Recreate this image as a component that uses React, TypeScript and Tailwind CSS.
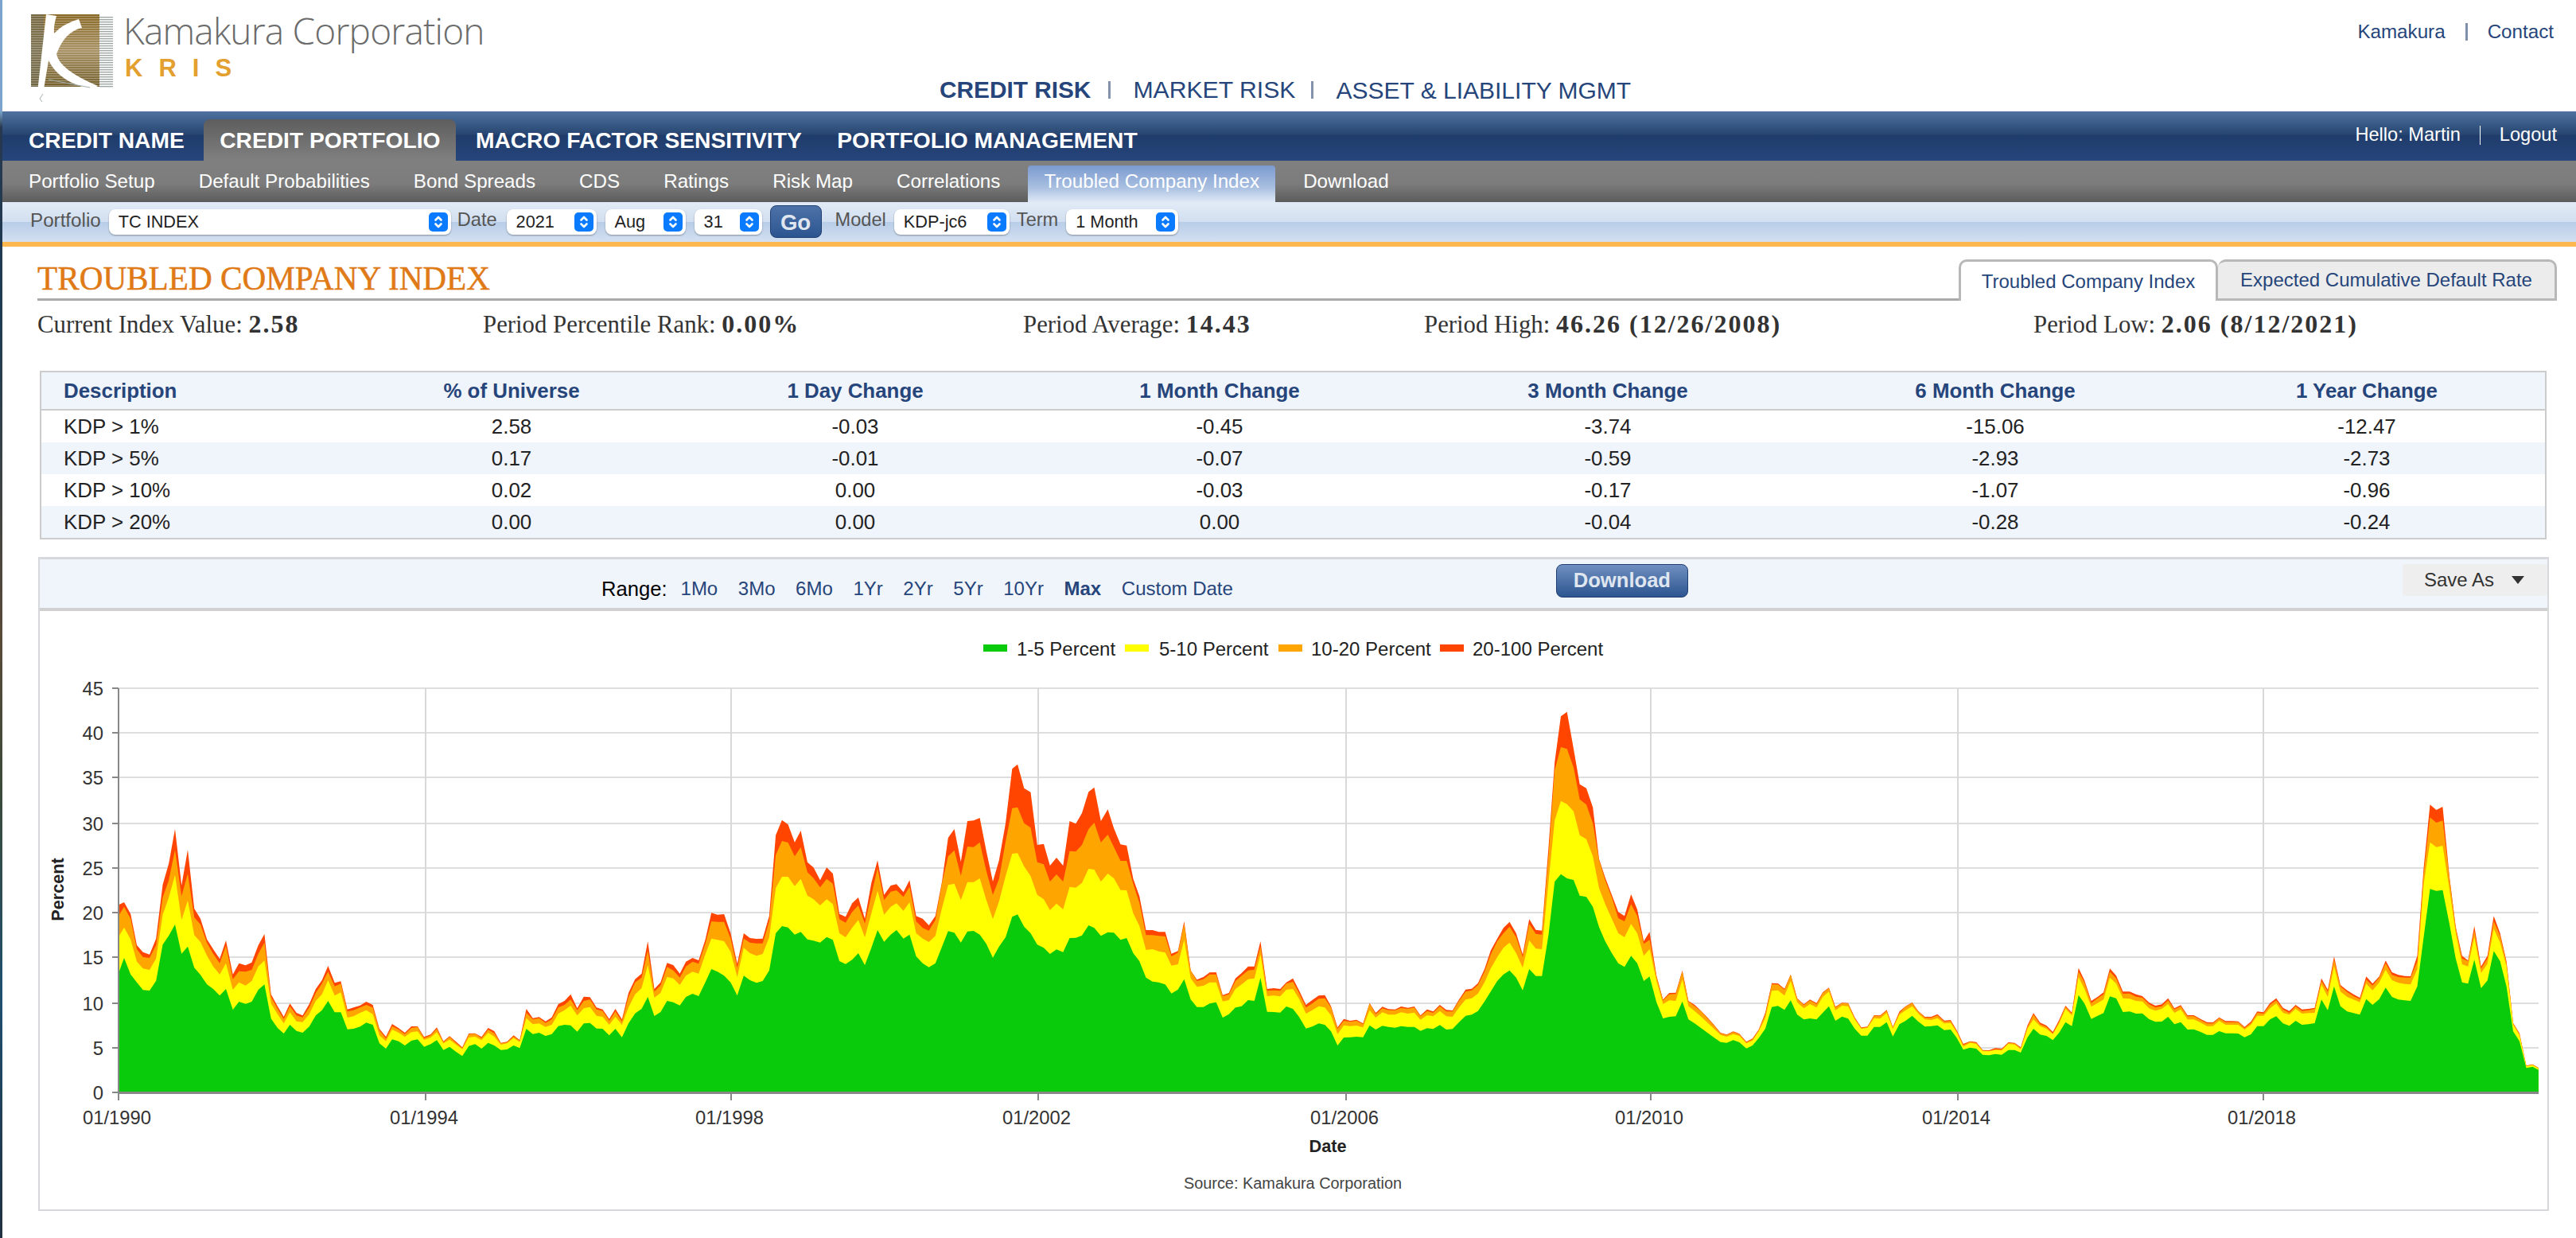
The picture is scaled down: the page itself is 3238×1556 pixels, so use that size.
const serif = 'font-[Liberation_Serif,serif]';

// chart traced month by month: crop x, then the tops of green, yellow, orange and red
const traces = [
  {
    ox: 140, oy: 960, sx: 2.063,
    rows: `20 790 655 575 537;33 738 623 545 528;50 800 668 590 572;66 830 752 705 690;82 859 778 735 716;99 861 783 738 725;116 824 740 690 665;133 688 575 510 462;149 654 510 445 382;165 612 425 330 252;182 722 595 505 465;198 695 522 420 330;215 775 652 585 552;231 802 678 612 590;248 838 730 682 668;264 855 770 722 705;281 880 800 758 742;297 855 758 692 672;315 933 858 818 800;331 903 830 788 758;348 911 842 790 766;364 903 825 783 755;381 858 770 722 690;397 838 748 680 648;414 967 910 885 875;431 1002 950 930 920;447 1023 985 968 960;463 990 943 920 910;480 1013 977 955 945;496 1020 980 962 955;513 997 950 925 912;530 955 900 870 855;546 935 875 835 822;562 900 822 790 768;579 943 880 845 832;595 943 868 835 826;612 1007 963 940 932;628 1005 958 935 925;645 997 945 925 917;661 982 935 915 903;678 990 950 925 915;695 1060 1030 1010 1005;712 1080 1052 1042 1035;728 1045 1008 995 987;745 1052 1020 1008 1003;761 1068 1035 1025 1020;778 1050 1018 1002 996;794 1045 1015 998 996;811 1073 1047 1040 1036;828 1063 1038 1030 1026;844 1048 1018 1005 1000;861 1085 1060 1055 1052;877 1073 1046 1036 1033;894 1092 1065 1058 1054;910 1108 1082 1078 1075;927 1070 1038 1026 1023;943 1063 1035 1024 1022;960 1080 1048 1040 1036;977 1058 1020 1008 1002;993 1068 1035 1022 1014;1010 1085 1065 1060 1058;1026 1083 1060 1056 1054;1043 1068 1040 1034 1030;1059 1078 1055 1050 1048;1076 1005 965 945 930;1093 1025 988 970 965;1109 1020 985 965 961;1126 1032 998 983 977;1142 1025 990 970 962;1159 995 948 925 912;1175 990 935 915 900;1191 992 918 895 875;1208 1016 955 935 928;1225 985 928 900 884;1241 983 923 895 886;1258 1004 956 932 925;1274 1005 960 938 932;1291 1030 990 975 968;1307 1005 960 940 930;1324 1037 990 978 970;1341 985 925 885 870;1358 947 875 830 818;1375 930 852 812 797;1391 885 765 710 675;1408 957 888 865 855;1424 942 870 842 830;1441 900 810 772 757;1457 905 815 785 765;1474 917 840 812 797;1490 885 805 770 752;1507 873 790 752 738;1523 882 797 760 747;1540 830 725 685 670;1556 780 665 600 568`,
  },
  {
    ox: 900, oy: 920, sx: 2.063,
    rows: `4 910 790 722 695;21 925 795 722 693;38 950 835 785 765;55 1000 930 895 880;72 925 820 785 765;88 942 840 800 783;105 952 850 803 786;121 945 843 803 785;138 905 780 720 700;155 765 595 470 395;171 738 552 417 338;187 743 552 423 355;204 770 587 475 422;220 760 560 440 378;237 788 623 535 497;253 793 637 557 517;270 800 660 592 565;287 779 637 560 517;303 790 655 578 540;320 870 765 712 692;336 881 780 725 703;353 865 745 685 652;369 840 715 660 630;386 885 780 728 710;403 820 690 620 575;419 753 605 520 490;436 797 695 640 620;453 770 665 608 585;468 753 652 603 580;486 785 680 628 610;502 770 648 590 565;519 852 765 720 700;536 878 785 745 710;552 893 798 755 735;569 878 775 715 700;586 815 670 575 570;602 757 583 475 405;618 763 578 452 372;635 800 640 548 495;652 758 572 438 342;668 756 572 440 340;684 770 558 422 330;701 805 640 530 455;718 857 712 620 570;734 815 645 560 490;751 780 550 420 350;768 703 465 293 145;782 694 463 290 128;799 740 513 350 218;816 765 550 367 233;833 808 620 497 432;850 820 637 505 428;866 843 678 570 510;883 826 653 543 480;900 836 675 570 510;917 783 590 455 342;933 782 593 457 352;949 773 575 432 312;966 735 522 372 232;981 745 525 348 215;998 775 570 422 342;1016 761 540 393 298;1032 763 558 440 370;1049 790 602 492 430;1065 783 603 492 434;1082 840 690 580 560;1098 870 737 650 625;1115 932 828 772 753;1132 947 825 772 753;1148 950 833 775 760;1165 958 838 777 760;1181 992 887 852 842;1198 977 882 838 832;1214 938 790 730 720;1231 1015 935 905 905;1247 1043 967 945 940;1264 1043 963 938 930;1280 1030 950 920 913;1297 1025 950 920 912;1314 1083 1022 1002 998;1330 1070 1017 995 990;1347 1045 975 945 935;1363 1040 958 925 915;1380 1017 938 905 890;1396 1020 935 902 890;1412 933 845 815 795;1429 1061 1002 982 975;1446 1062 1000 980 972;1463 1064 1003 982 975;1479 1041 978 955 950;1496 1050 975 948 935;1512 1080 1012 990 980;1530 1124 1068 1045 1035;1546 1117 1055 1030 1017;1563 1105 1040 1012 1000`,
  },
  {
    ox: 1660, oy: 870, sx: 2.063,
    rows: `11 1260 1195 1160 1148;27 1285 1225 1195 1190;44 1338 1295 1275 1270;60 1308 1262 1245 1238;77 1307 1265 1249 1245;93 1305 1263 1245 1241;110 1307 1270 1258 1255;127 1262 1205 1180 1178;143 1278 1233 1220 1215;160 1264 1213 1198 1192;176 1268 1222 1205 1201;193 1271 1222 1205 1202;209 1265 1213 1197 1191;226 1268 1218 1200 1196;243 1268 1214 1195 1191;259 1283 1241 1228 1225;276 1273 1224 1208 1202;292 1276 1228 1215 1210;309 1261 1208 1190 1185;326 1278 1228 1210 1204;342 1276 1230 1210 1206;359 1250 1195 1170 1165;376 1226 1165 1135 1127;392 1222 1160 1130 1124;408 1208 1142 1110 1103;425 1172 1100 1060 1050;441 1135 1048 995 980;458 1095 1005 945 935;474 1070 970 915 895;490 1055 950 890 872;507 1082 990 930 915;524 1130 1045 1005 995;541 1050 942 880 862;558 1076 973 917 902;574 1076 975 920 905;591 920 720 620 590;607 720 490 300 270;623 692 416 213 97;639 708 428 220 80;656 714 455 290 220;672 773 545 410 353;689 778 560 430 368;706 815 625 500 440;722 892 745 640 635;738 945 805 715 705;755 990 860 780 770;772 1028 915 858 835;788 1042 930 870 850;805 1000 880 805 768;821 1028 915 850 825;838 1095 1000 955 945;853 1078 975 940 910;871 1175 1095 1078 1075;888 1236 1182 1168 1165;904 1230 1168 1145 1140;921 1228 1170 1144 1139;938 1172 1090 1060 1055;954 1240 1190 1172 1170;970 1255 1208 1190 1185;987 1273 1230 1210 1208;1003 1290 1252 1235 1232;1020 1308 1275 1262 1260;1037 1325 1298 1292 1290;1053 1328 1305 1298 1297;1070 1318 1295 1287 1285;1086 1326 1302 1296 1294;1104 1349 1330 1326 1324;1120 1338 1320 1315 1312;1136 1310 1285 1280 1278;1153 1275 1235 1220 1215;1170 1193 1132 1108 1103;1186 1189 1130 1108 1104;1203 1204 1150 1128 1124;1219 1168 1095 1072 1070;1236 1222 1175 1162 1160;1253 1240 1198 1186 1183;1269 1236 1182 1168 1165;1286 1240 1195 1182 1178;1302 1215 1155 1140 1138;1318 1190 1135 1122 1120;1335 1245 1205 1195 1192;1352 1229 1188 1178 1177;1368 1237 1190 1180 1178;1385 1275 1240 1235 1232;1402 1301 1275 1272 1270;1418 1301 1272 1268 1267;1435 1268 1235 1226 1224;1451 1268 1237 1227 1225;1468 1250 1215 1207 1204;1484 1304 1275 1270 1268;1501 1258 1222 1215 1210;1517 1245 1205 1192 1190;1534 1226 1190 1178 1176;1550 1248 1218 1210 1208;1567 1267 1240 1233 1230`,
  },
  {
    ox: 2420, oy: 990, sx: 2.008,
    rows: `15 905 882 874 870;31 902 875 865 860;48 920 895 888 884;64 918 893 886 882;80 950 930 925 922;96 994 982 976 972;113 986 968 964 962;129 990 972 968 965;145 1013 1000 997 995;161 1015 1000 998 996;177 1010 995 992 988;193 1013 997 993 990;210 995 972 968 966;226 995 975 970 968;241 1005 992 988 985;258 948 915 908 902;273 915 880 862 856;290 937 905 898 892;306 942 915 908 903;322 958 935 932 927;338 930 895 888 882;354 890 840 832 828;370 905 865 858 854;387 788 720 700 686;402 820 765 740 733;419 878 832 818 810;435 866 818 800 795;450 856 805 785 778;466 793 722 700 688;482 800 745 725 715;499 852 800 783 775;516 850 802 782 775;532 858 810 794 785;548 857 812 798 792;565 879 838 823 816;581 889 847 835 828;597 888 840 830 823;613 870 822 808 800;629 898 855 842 838;645 890 842 830 826;662 918 880 868 864;678 917 880 868 864;695 927 892 882 878;711 938 905 895 890;726 938 905 895 891;742 924 885 875 872;758 932 900 890 886;773 932 900 890 886;790 933 900 890 887;806 947 918 912 908;822 936 900 893 888;838 905 866 855 850;854 905 866 858 853;870 880 838 825 818;886 868 820 808 800;903 895 855 842 836;919 904 862 855 848;935 885 840 830 825;951 900 858 848 842;967 898 856 845 840;983 894 855 840 836;1000 805 748 735 725;1016 845 795 775 768;1032 755 680 655 643;1048 830 775 755 750;1065 850 795 777 770;1081 856 805 792 785;1097 862 815 803 798;1113 803 745 730 718;1129 825 770 752 745;1146 803 740 722 718;1162 760 692 668 658;1178 795 732 712 702;1194 805 742 720 712;1210 808 746 722 716;1225 810 748 722 717;1242 755 690 660 640;1258 570 370 330 310;1274 388 212 118 70;1290 395 230 138 90;1306 392 225 130 78;1323 520 390 345 340;1339 650 555 535 530;1355 740 672 650 640;1370 745 680 660 658;1386 655 570 545 528;1403 762 705 688 680;1419 733 670 650 640;1435 622 538 510 490;1451 660 590 565 555;1467 755 680 665 660;1484 925 900 895 893;1500 962 940 935 932;1517 1063 1057 1055 1054;1533 1058 1052 1050 1049;1548 1070 1065 1063 1062`,
  },
];

const points = traces.flatMap((t) =>
  t.rows.split(';').map((row) => {
    const [x, ...tops] = row.split(' ').map(Number);
    return { x: t.ox + x / t.sx, tops: tops.map((v) => t.oy + v / 3) };
  }),
);

const AXIS_Y = 1375;
const seriesFill = ['#0acb0b', '#ffff00', '#ffa500', '#ff4500'];

function areaPoints(series: number) {
  const line = points.map((p) => `${p.x.toFixed(1)},${p.tops[series].toFixed(1)}`).join(' ');
  return `${points[0].x.toFixed(1)},${AXIS_Y} ${line} ${points[points.length - 1].x.toFixed(1)},${AXIS_Y}`;
}

const yTicks = [
  [45, 867],
  [40, 923],
  [35, 979],
  [30, 1037],
  [25, 1093],
  [20, 1149],
  [15, 1205],
  [10, 1263],
  [5, 1319],
  [0, 1375],
];

const xTicks = [
  ['01/1990', 149],
  ['01/1994', 535],
  ['01/1998', 919],
  ['01/2002', 1305],
  ['01/2006', 1692],
  ['01/2010', 2075],
  ['01/2014', 2461],
  ['01/2018', 2845],
] as const;

const legend = [
  { label: '1-5 Percent', color: seriesFill[0], x: 1236, tx: 1278 },
  { label: '5-10 Percent', color: seriesFill[1], x: 1414, tx: 1457 },
  { label: '10-20 Percent', color: seriesFill[2], x: 1607, tx: 1648 },
  { label: '20-100 Percent', color: seriesFill[3], x: 1810, tx: 1851 },
];

function Chart() {
  return (
    <svg viewBox="50 770 3152 752" className="block w-[3152px] h-[752px]" fontFamily="'Liberation Sans', sans-serif">
      {legend.map((l) => (
        <g key={l.label}>
          <rect x={l.x} y={812} width={30} height={9} fill={l.color} />
          <text x={l.tx} y={826} fontSize={24} fill="#222">
            {l.label}
          </text>
        </g>
      ))}
      {yTicks.map(([v, y]) => (
        <g key={v}>
          {v !== 0 && <rect x={150} y={y - 1} width={3041} height={2} fill="#dedede" />}
          <rect x={141} y={y - 1} width={8} height={2} fill="#888" />
          <text x={130} y={y + 9} fontSize={23.8} textAnchor="end" fill="#333">
            {v}
          </text>
        </g>
      ))}
      {xTicks.map(([label, x]) => (
        <g key={label}>
          {x !== 149 && <rect x={x - 1} y={867} width={2} height={508} fill="#d9d9d9" />}
          <rect x={x - 1} y={1375} width={2} height={10} fill="#888" />
          <text x={x - 2} y={1415} fontSize={23.8} textAnchor="middle" fill="#333">
            {label}
          </text>
        </g>
      ))}
      {[3, 2, 1, 0].map((s) => (
        <polygon key={s} points={areaPoints(s)} fill={seriesFill[s]} />
      ))}
      <rect x={148} y={867} width={2} height={510} fill="#888" />
      <rect x={148} y={1374} width={3043} height={3} fill="#888" />
      <text x={1669} y={1450} fontSize={21.7} fontWeight="bold" textAnchor="middle" fill="#222">
        Date
      </text>
      <text x={1625} y={1496} fontSize={19.9} textAnchor="middle" fill="#444">
        Source: Kamakura Corporation
      </text>
      <text
        transform="translate(80 1120) rotate(-90)"
        fontSize={21.7}
        fontWeight="bold"
        textAnchor="middle"
        fill="#222"
      >
        Percent
      </text>
    </svg>
  );
}

function Logo() {
  const rows = Array.from({ length: 30 }, (_, i) => 20 + i * 3);
  return (
    <svg viewBox="0 0 150 135" className="w-[150px] h-[135px] shrink-0">
      <defs>
        <linearGradient id="logoFill" x1="0" x2="0" y1="0" y2="1">
          <stop offset="0" stopColor="#8a6a28" />
          <stop offset="0.5" stopColor="#a99366" />
          <stop offset="1" stopColor="#75602e" />
        </linearGradient>
      </defs>
      <rect x={36} y={18} width={86} height={91} fill="url(#logoFill)" />
      <rect x={36} y={18} width={16} height={91} fill="#6f6a4e" opacity={0.7} />
      {rows.map((y) => (
        <rect key={y} x={33} y={y} width={106} height={1} fill="#ffffff" opacity={0.3} />
      ))}
      {rows.map((y) => (
        <rect key={y} x={122} y={y + 1} width={17} height={1.4} fill="#9fa8a4" />
      ))}
      <path d="M55 18 L68 20 Q64 33 65 42 Q76 30 96 24 L100 35 Q78 40 68 68 Q72 88 120 108 L112 112 Q72 104 58 76 L51 118 L50 128 L44 116 Z" fill="#ffffff" />
      <path d="M51 118 L47 124 L50 128 M58 100 L110 110" stroke="#9fb0ad" strokeWidth={1} fill="none" />
    </svg>
  );
}

function Stepper() {
  return (
    <span className="flex items-center justify-center w-[24px] h-[24px] rounded-[5px] bg-[#0a7aff] shrink-0">
      <svg viewBox="0 0 24 24" className="w-[24px] h-[24px]" fill="none" stroke="#ffffff" strokeWidth={2.6} strokeLinecap="round" strokeLinejoin="round">
        <path d="M8.5 9.5 L12 6 L15.5 9.5" />
        <path d="M8.5 14.5 L12 18 L15.5 14.5" />
      </svg>
    </span>
  );
}

function FakeSelect({ value, className }: { value: string; className: string }) {
  return (
    <div className={`flex items-center justify-between h-[32px] pl-[12px] pr-[4px] rounded-[8px] bg-white shadow-[0_1px_2px_rgba(0,0,0,0.35)] text-[21.7px] text-[#222] ${className}`}>
      <span>{value}</span>
      <Stepper />
    </div>
  );
}

const subNav = ['Portfolio Setup', 'Default Probabilities', 'Bond Spreads', 'CDS', 'Ratings', 'Risk Map', 'Correlations', 'Troubled Company Index', 'Download'];
const mainNav = ['CREDIT NAME', 'CREDIT PORTFOLIO', 'MACRO FACTOR SENSITIVITY', 'PORTFOLIO MANAGEMENT'];
const ranges = ['1Mo', '3Mo', '6Mo', '1Yr', '2Yr', '5Yr', '10Yr', 'Max', 'Custom Date'];

const stats = [
  { label: 'Current Index Value:', value: '2.58' },
  { label: 'Period Percentile Rank:', value: '0.00%' },
  { label: 'Period Average:', value: '14.43' },
  { label: 'Period High:', value: '46.26 (12/26/2008)' },
  { label: 'Period Low:', value: '2.06 (8/12/2021)' },
];

const columns = ['Description', '% of Universe', '1 Day Change', '1 Month Change', '3 Month Change', '6 Month Change', '1 Year Change'];
const tableRows = [
  ['KDP > 1%', '2.58', '-0.03', '-0.45', '-3.74', '-15.06', '-12.47'],
  ['KDP > 5%', '0.17', '-0.01', '-0.07', '-0.59', '-2.93', '-2.73'],
  ['KDP > 10%', '0.02', '0.00', '-0.03', '-0.17', '-1.07', '-0.96'],
  ['KDP > 20%', '0.00', '0.00', '0.00', '-0.04', '-0.28', '-0.24'],
];
const tableGrid = 'grid grid-cols-[395px_392px_450px_488px_488px_486px_1fr] items-center';

function cellClass(i: number) {
  if (i === 0) return 'pl-[28px]';
  return i === 2 ? 'text-center pl-[22px]' : 'text-center';
}

export default function App() {
  return (
    <div className="flex min-h-[1556px] bg-white font-[Liberation_Sans,sans-serif]">
      <div className="w-[3px] shrink-0 bg-[linear-gradient(#7ba3cc_0,#7ba3cc_140px,#27384f_160px,#1d3b52_400px,#5a4a38_800px,#3a4a3a_1000px,#1f4f6f_1250px,#203040_1556px)]" />
      <div className="flex-1 min-w-0">
        {/* top header */}
        <header className="flex h-[140px]">
          <div className="w-[1178px] flex items-start">
            <Logo />
            <div className="ml-[2px] pt-[9px] whitespace-nowrap">
              <div className="text-[46px] leading-[58px] font-light text-[#6b6b6b] tracking-[-0.8px] font-[Open_Sans,sans-serif]">Kamakura Corporation</div>
              <div className="mt-[3px] ml-[2px] text-[31px] leading-[32px] font-bold text-[#e3a02f] tracking-[20px]">KRIS</div>
            </div>
          </div>
          <nav className="flex items-center h-[40px] mt-[93px] text-[#26457a]">
            <span className="text-[29.8px] font-bold">CREDIT RISK</span>
            <span className="ml-[22px] mr-[28px] w-[3px] h-[22px] bg-[#8493ad]" />
            <span className="text-[30.2px]">MARKET RISK</span>
            <span className="ml-[20px] mr-[28px] w-[3px] h-[22px] bg-[#8493ad]" />
            <span className="text-[30px]">ASSET &amp; LIABILITY MGMT</span>
          </nav>
          <div className="ml-auto pr-[28px] pt-[26px] flex items-center h-[54px] gap-[25px] text-[24.2px] text-[#26457a]">
            <span>Kamakura</span>
            <span className="w-[3px] h-[22px] bg-[#7f90ad]" />
            <span>Contact</span>
          </div>
        </header>

        {/* main nav */}
        <div className="flex items-end h-[62px] pl-[13px] pr-[24px] gap-[4.5px] bg-[linear-gradient(#4f729f_0%,#274571_47%,#1f3c6b_49%,#26457a_100%)]">
          {mainNav.map((item) => (
            <div
              key={item}
              className={
                item === 'CREDIT PORTFOLIO'
                  ? 'flex items-center h-[52px] px-[20px] rounded-t-[8px] bg-[linear-gradient(#5d5d5d,#808080)] text-white text-[28.2px] font-bold'
                  : 'flex items-center h-[52px] px-[20px] text-white text-[28.2px] font-bold'
              }
            >
              {item}
            </div>
          ))}
          <div className="ml-auto flex items-center h-[62px] pb-[2px] gap-[24px] text-white text-[23.6px]">
            <span>Hello: Martin</span>
            <span className="w-[1px] h-[24px] bg-white" />
            <span>Logout</span>
          </div>
        </div>

        {/* sub nav */}
        <div className="flex items-end h-[52px] pl-[13px] gap-[15px] bg-[linear-gradient(#808080_0%,#7c7c7c_55%,#5c5c5c_100%)]">
          {subNav.map((item) => (
            <div
              key={item}
              className={
                item === 'Troubled Company Index'
                  ? 'flex items-center h-[46px] px-[20px] pb-[6px] rounded-t-[4px] bg-[linear-gradient(#7c9ad0,#a8bfe0_60%,#dfe9f6)] text-white text-[24.2px]'
                  : 'flex items-center h-[46px] px-[20px] pb-[6px] text-white text-[24.2px]'
              }
            >
              {item}
            </div>
          ))}
        </div>

        {/* filter bar */}
        <div className="flex items-center h-[50px] pl-[35px] bg-[linear-gradient(#e2ebf7_0%,#d2dff0_49%,#b8cde8_50%,#d3e0f1_100%)] text-[23.6px] text-[#555]">
          <span className="mb-[4px] text-[24.2px]">Portfolio</span>
          <FakeSelect value="TC INDEX" className="ml-[10px] w-[430px]" />
          <span className="ml-[8px] mb-[4px]">Date</span>
          <FakeSelect value="2021" className="ml-[12px] w-[113px]" />
          <FakeSelect value="Aug" className="ml-[11px] w-[101px]" />
          <FakeSelect value="31" className="ml-[11px] w-[85px]" />
          <button className="ml-[10px] mb-[2px] w-[65px] h-[41px] rounded-[8px] border border-[#1f3f73] bg-[linear-gradient(#4d72a8,#2c5590)] text-[#dfe6f0] text-[27.6px] font-bold">Go</button>
          <span className="ml-[17px] mb-[4px]">Model</span>
          <FakeSelect value="KDP-jc6" className="ml-[10px] w-[145px]" />
          <span className="ml-[9px] mb-[4px]">Term</span>
          <FakeSelect value="1 Month" className="ml-[10px] w-[141px]" />
        </div>
        <div className="h-[6px] bg-[#ffb74f]" />

        {/* title and tabs */}
        <div className="flex items-end h-[52px] mt-[16px] ml-[44px] mr-[24px]">
          <div className={`flex-1 flex items-center h-[52px] border-b-[3px] border-[#aaaaaa] text-[41.2px] text-[#df7a17] [-webkit-text-stroke:0.5px_#df7a17] ${serif}`}>TROUBLED COMPANY INDEX</div>
          <div className="flex items-center justify-center w-[326px] h-[52px] rounded-t-[10px] border-[3px] border-b-0 border-[#b8b8b8] bg-white text-[24px] text-[#26457a]">Troubled Company Index</div>
          <div className="flex items-center justify-center w-[426px] h-[52px] rounded-t-[10px] border-[3px] border-l-0 border-[#b8b8b8] bg-[#ececec] text-[24px] text-[#26457a]">Expected Cumulative Default Rate</div>
        </div>

        {/* stats */}
        <div className={`grid grid-cols-[560px_679px_504px_766px_1fr] items-center h-[58px] ml-[44px] text-[30.8px] text-[#333] ${serif}`}>
          {stats.map((s) => (
            <div key={s.label}>
              {s.label} <b className="text-[32px] tracking-[2px]">{s.value}</b>
            </div>
          ))}
        </div>

        {/* table */}
        <div className="mt-[30px] ml-[47px] w-[3151px] border-2 border-[#cccccc] text-[25.9px] text-[#222]">
          <div className={`${tableGrid} h-[48px] border-b-2 border-[#cccccc] bg-[#f0f4fb] font-bold text-[#26457a]`}>
            {columns.map((c, i) => (
              <div key={c} className={cellClass(i)}>
                {c}
              </div>
            ))}
          </div>
          {tableRows.map((row, r) => (
            <div key={row[0]} className={`${tableGrid} h-[40px] ${r % 2 === 1 ? 'bg-[#f0f4fb]' : 'bg-white'}`}>
              {row.map((cell, i) => (
                <div key={i} className={cellClass(i)}>
                  {cell}
                </div>
              ))}
            </div>
          ))}
        </div>

        {/* chart panel */}
        <div className="mt-[22px] ml-[45px] w-[3156px] border-2 border-t-[3px] border-[#d6d8dc]">
          <div className="flex items-center h-[65px] border-b-4 border-[#d0d0d0] bg-[#f0f4fb]">
            <div className="flex items-center mt-[14px] ml-[706px] text-[24px] text-[#26457a]">
              <span className="mr-[17px] text-[25.6px] text-black">Range:</span>
              <div className="flex gap-[25.6px]">
                {ranges.map((r) => (
                  <span key={r} className={r === 'Max' ? 'font-bold' : ''}>
                    {r}
                  </span>
                ))}
              </div>
            </div>
            <button className="ml-[406px] mb-[8px] w-[166px] h-[42px] rounded-[8px] border border-[#1f3f73] bg-[linear-gradient(#6f8fc0,#2d5590)] text-[#dfe6f0] text-[25.6px] font-bold">Download</button>
            <div className="ml-auto mb-[10px] flex items-center w-[182px] h-[40px] pl-[27px] rounded-[4px] bg-[#eeeeee] text-[24px] text-[#333]">
              <span>Save As</span>
              <span className="ml-[22px] w-0 h-0 border-x-[8px] border-t-[10px] border-x-transparent border-t-[#333]" />
            </div>
          </div>
          <Chart />
        </div>
      </div>
    </div>
  );
}
